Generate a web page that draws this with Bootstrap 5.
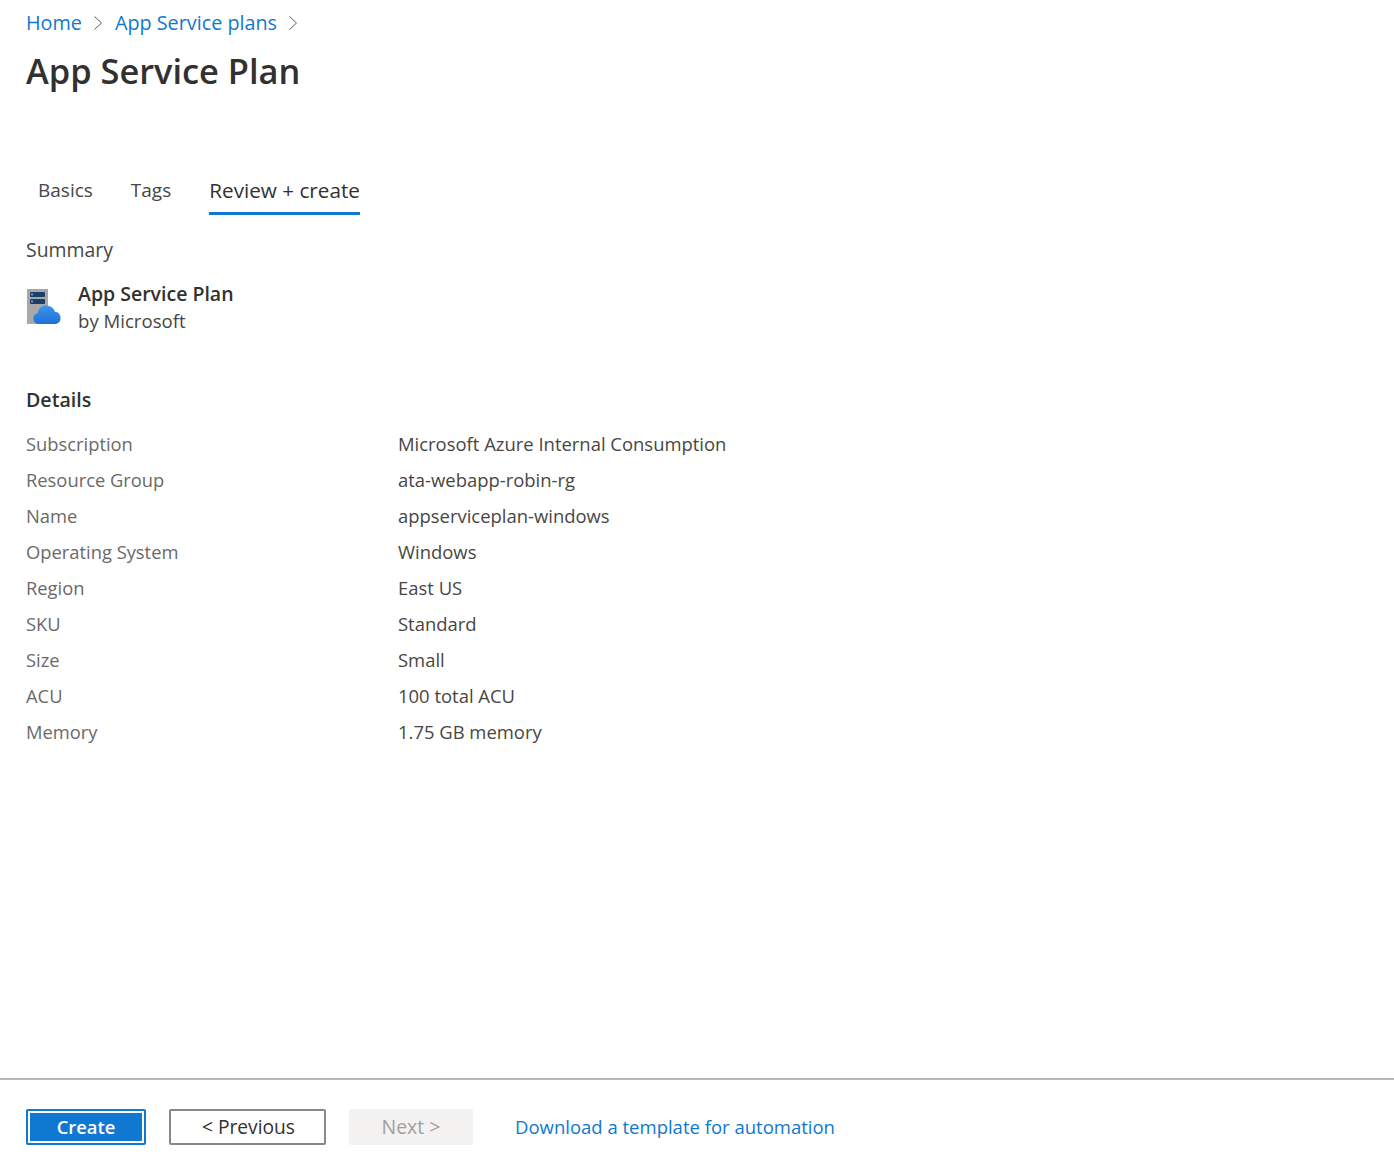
<!DOCTYPE html>
<html lang="en">
<head>
  <meta charset="UTF-8">
  <meta name="viewport" content="width=device-width, initial-scale=1.0">
  <title>App Service Plan</title>
  <link href="https://cdn.jsdelivr.net/npm/bootstrap@5.3.1/dist/css/bootstrap.min.css" rel="stylesheet">
  <style>
    body { font-family: "Open Sans", "Noto Sans", sans-serif; font-size: 18.5px; color: #323130; height: 1174px; overflow: hidden; }
    a { color: #0f78d0; text-decoration: none; }
    .page-top { padding: 10px 26px 0; }
    .crumbs { height: 26px; line-height: 26px; gap: 11px; font-size: 19.8px; }
    .crumb-sep { width: 11px; height: 16px; stroke: #605e5c; fill: none; }
    .page-title { font-size: 34.4px; font-weight: 600; line-height: 46px; margin: 12px 0 0; color: #323130; }
    .tab-row { margin-top: 75px; padding-left: 12px; gap: 38px; }
    .tab-item { height: 46px; line-height: 42px; padding: 0; font-size: 19px; color: #484644; border-bottom: 3px solid transparent; }
    .tab-item.on { border-bottom-color: #0f78d0; color: #323130; font-size: 20.7px; font-weight: 500; }
    .sum-title { margin-top: 20px; font-size: 19.4px; line-height: 30px; color: #484644; }
    .prod-line { margin-top: 15px; gap: 16px; }
    .prod-name { font-size: 19.5px; font-weight: 600; line-height: 27px; }
    .prod-by { font-size: 18.6px; line-height: 27px; color: #484644; }
    .det-title { margin-top: 51px; font-size: 19.6px; font-weight: 600; line-height: 30px; }
    .det-list { margin-top: 11px; margin-bottom: 0; }
    .det-list .row { --bs-gutter-x: 0; height: 36px; line-height: 36px; }
    .det-list dt { width: 372px; font-size: 18.35px; font-weight: 400; color: #6b6a69; margin: 0; }
    .det-list dd { width: auto; font-size: 18.45px; color: #484644; margin: 0; }
    .page-foot { margin-top: auto; height: 96px; border-top: 2px solid #b8b8b8; padding: 29px 26px 0; gap: 23px; }
    .foot-btn { height: 36px; padding: 0; line-height: 1; border-radius: 2px; font-weight: 500; }
    .btn-make { width: 120px; font-size: 18.4px; background: #0f78d0; color: #fff; border: 2px solid #0f78d0; outline: 2px solid #fff; outline-offset: -4px; font-weight: 600; }
    .btn-prev { width: 157px; padding-left: 2px; font-size: 19.2px; background: #fff; color: #323130; border: 2px solid #8a8886; }
    .btn.btn-next:disabled { width: 124px; font-size: 19.5px; background: #f3f2f1; color: #a19f9d; border: 0; opacity: 1; }
    .foot-link { margin-left: 19px; line-height: 36px; }
  </style>
</head>
<body class="d-flex flex-column">

<div class="page-top">
  <nav class="crumbs d-flex align-items-center">
    <a href="#">Home</a>
    <svg class="crumb-sep" viewBox="0 0 11 16"><path d="M1.5 1.5 8.5 8l-7 6.5"/></svg>
    <a href="#">App Service plans</a>
    <svg class="crumb-sep" viewBox="0 0 11 16"><path d="M1.5 1.5 8.5 8l-7 6.5"/></svg>
  </nav>
  <h1 class="page-title">App Service Plan</h1>

  <div class="tab-row d-flex">
    <a class="tab-item" href="#">Basics</a>
    <a class="tab-item" href="#">Tags</a>
    <a class="tab-item on" href="#">Review + create</a>
  </div>

  <div class="sum-title">Summary</div>
  <div class="prod-line d-flex align-items-center">
    <svg width="36" height="40" viewBox="0 0 36 40">
      <defs>
        <linearGradient id="cloudFill" x1="0" y1="0" x2="0" y2="1">
          <stop offset="0" stop-color="#3b97ea"/>
          <stop offset="1" stop-color="#1f6fd6"/>
        </linearGradient>
      </defs>
      <rect x="1" y="2" width="21" height="35" fill="#a8a8a8"/>
      <rect x="4" y="5" width="15" height="5" rx="1" fill="#1b3f66"/>
      <rect x="4" y="12" width="15" height="5" rx="1" fill="#1b3f66"/>
      <circle cx="6" cy="7.500" r="1" fill="#5ec2ee"/>
      <circle cx="6" cy="14.500" r="1" fill="#5ec2ee"/>
      <path d="M13 37a5.500 5.500 0 0 1-1.500-10.800 9 9 0 0 1 17.500-1.500 6.300 6.300 0 0 1 1 12.300Z" fill="url(#cloudFill)"/>
    </svg>
    <div>
      <div class="prod-name">App Service Plan</div>
      <div class="prod-by">by Microsoft</div>
    </div>
  </div>

  <div class="det-title">Details</div>
  <dl class="det-list">
    <div class="row"><dt class="col-auto">Subscription</dt><dd class="col-auto">Microsoft Azure Internal Consumption</dd></div>
    <div class="row"><dt class="col-auto">Resource Group</dt><dd class="col-auto">ata-webapp-robin-rg</dd></div>
    <div class="row"><dt class="col-auto">Name</dt><dd class="col-auto">appserviceplan-windows</dd></div>
    <div class="row"><dt class="col-auto">Operating System</dt><dd class="col-auto">Windows</dd></div>
    <div class="row"><dt class="col-auto">Region</dt><dd class="col-auto">East US</dd></div>
    <div class="row"><dt class="col-auto">SKU</dt><dd class="col-auto">Standard</dd></div>
    <div class="row"><dt class="col-auto">Size</dt><dd class="col-auto">Small</dd></div>
    <div class="row"><dt class="col-auto">ACU</dt><dd class="col-auto">100 total ACU</dd></div>
    <div class="row"><dt class="col-auto">Memory</dt><dd class="col-auto">1.75 GB memory</dd></div>
  </dl>
</div>

<div class="page-foot d-flex align-items-start">
  <button class="btn foot-btn btn-make" type="button">Create</button>
  <button class="btn foot-btn btn-prev" type="button">&lt; Previous</button>
  <button class="btn foot-btn btn-next" type="button" disabled>Next &gt;</button>
  <a class="foot-link" href="#">Download a template for automation</a>
</div>

<script src="https://cdn.jsdelivr.net/npm/bootstrap@5.3.1/dist/js/bootstrap.bundle.min.js"></script>
</body>
</html>
